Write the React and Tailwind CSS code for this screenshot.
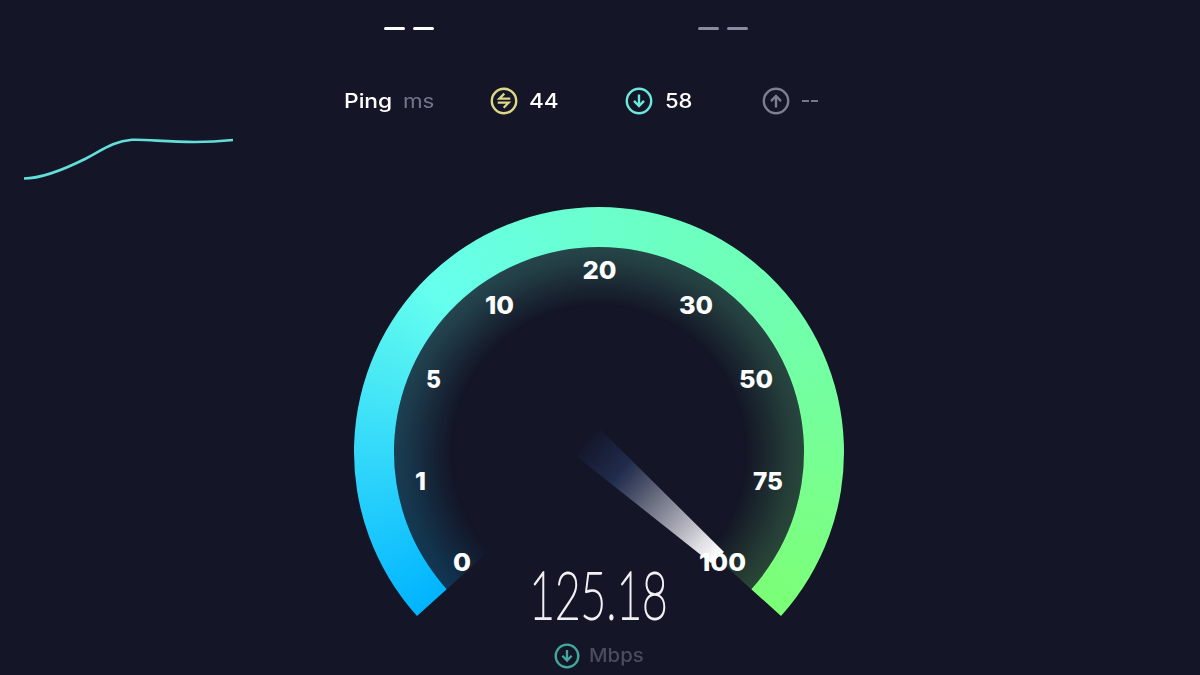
import React from 'react';

const labels = [
  { text: '0', x: 453, y: 570.5, width: 18 },
  { text: '1', x: 415, y: 489.5, width: 11 },
  { text: '5', x: 426, y: 387.5, width: 15 },
  { text: '10', x: 485, y: 313.5, width: 29 },
  { text: '20', x: 582.5, y: 279, width: 34 },
  { text: '30', x: 679, y: 313.5, width: 34 },
  { text: '50', x: 739, y: 387.5, width: 34 },
  { text: '75', x: 753, y: 489.5, width: 30 },
  { text: '100', x: 699, y: 570.5, width: 47 },
];

function CircleIcon({ type, className, strokeWidth = 2.4 }) {
  return (
    <svg viewBox="0 0 28 28" className={className} fill="none" stroke="currentColor" strokeWidth={strokeWidth}>
      <circle cx="14" cy="14" r="12.2" />
      {type === 'down' && <path d="M14 7.5V19M9 13.8L14 19L19 13.8" />}
      {type === 'up' && <path d="M14 20.5V9M9 14.2L14 9L19 14.2" />}
      {type === 'swap' && <path d="M14.3 6.6L9.3 11.6H20.3M7.7 15.6H18.7L13.7 20.8" strokeWidth="2.2" />}
    </svg>
  );
}

function Dashes({ className }) {
  return (
    <div className={`flex gap-2 ${className}`}>
      <span className="h-[3px] w-[21px] rounded-sm bg-current" />
      <span className="h-[3px] w-[21px] rounded-sm bg-current" />
    </div>
  );
}

function Header() {
  return (
    <header className="h-[130px] pt-[27.4px]">
      <div className="flex pl-[384px]">
        <Dashes className="w-[314px] text-white" />
        <Dashes className="text-[#8a8ba0]" />
      </div>
      <div className="mt-[56.6px] flex h-7 items-center pl-[344px] text-[20px] font-medium text-white">
        <span className="w-[59px]"><span className="inline-block origin-left scale-x-[1.14]">Ping</span></span>
        <span className="w-[87px] font-normal text-[#75768c]"><span className="inline-block origin-left scale-x-[1.12]">ms</span></span>
        <CircleIcon type="swap" className="mr-[11px] size-7 text-[#ded886]" />
        <span className="w-[96px]"><span className="inline-block origin-left scale-x-[1.13]">44</span></span>
        <CircleIcon type="down" className="mr-3 size-7 text-[#6be9dc]" />
        <span className="w-[97px]"><span className="inline-block origin-left scale-x-[1.1]">58</span></span>
        <CircleIcon type="up" className="mr-3 size-7 text-[#7d7e92]" />
        <span className="flex gap-[2px] text-[#75768a]">
          <span className="h-[2px] w-[7px] bg-current" />
          <span className="h-[2px] w-[7px] bg-current" />
        </span>
      </div>
    </header>
  );
}

function Gauge() {
  return (
    <svg viewBox="340 200 520 420" className="h-[420px] w-[520px]">
      <defs>
        <clipPath id="ring">
          <path d="M417 616A245 245 0 1 1 781 616L751.3 589.2A205 205 0 1 0 446.7 589.2Z" />
        </clipPath>
        <clipPath id="inside">
          <path d="M599 452L446.7 589.2A205 205 0 1 1 751.3 589.2Z" />
        </clipPath>
        <linearGradient id="needle" gradientUnits="userSpaceOnUse" x1="582" y1="437" x2="717" y2="558">
          <stop offset="0" stopColor="#20305a" stopOpacity="0" />
          <stop offset="0.28" stopColor="#25345c" stopOpacity="0.7" />
          <stop offset="0.5" stopColor="#6b6f83" stopOpacity="0.9" />
          <stop offset="0.88" stopColor="#dedee3" />
          <stop offset="1" stopColor="#fff" />
        </linearGradient>
      </defs>
      <g clipPath="url(#inside)">
        <foreignObject x="349" y="202" width="500" height="500">
          <div className="size-[500px] bg-[conic-gradient(from_222deg,#00b4ff_0deg,#00b4ff_6deg,#34d9fa_48deg,#66ffee_92deg,#6affcc_138deg,#70ffaf_190deg,#78ff8f_235deg,#7cff72_276deg,#7cff72_318deg,#00b4ff_318deg)] opacity-21 [mask-image:radial-gradient(circle_at_center,transparent_145px,rgba(0,0,0,0.4)_168px,rgba(0,0,0,0.8)_190px,black_205px)]" />
        </foreignObject>
      </g>
      <g clipPath="url(#ring)">
        <foreignObject x="349" y="202" width="500" height="500">
          <div className="size-[500px] bg-[conic-gradient(from_222deg,#00b4ff_0deg,#00b4ff_6deg,#34d9fa_48deg,#66ffee_92deg,#6affcc_138deg,#70ffaf_190deg,#78ff8f_235deg,#7cff72_276deg,#7cff72_318deg,#00b4ff_318deg)]" />
        </foreignObject>
      </g>
      <path d="M600 429L724 552L711 563L576 456Z" fill="url(#needle)" />
      <g fill="#fff" fontSize="24.5" fontWeight="800">
        {labels.map((l) => (
          <text key={l.text} x={l.x} y={l.y} textLength={l.width} lengthAdjust="spacingAndGlyphs">{l.text}</text>
        ))}
      </g>
    </svg>
  );
}

export default function App() {
  return (
    <div className="h-[675px] w-[1200px] overflow-hidden bg-[#141526] font-['Inter',sans-serif]">
      <Header />
      <main className="flex h-[545px]">
        <svg viewBox="0 0 240 70" className="h-[70px] w-[240px] shrink-0" fill="none">
          <path d="M24 48.5C43 48.5 68 37.5 86 28.5C103 19.5 114 11 132 9.8C148 9.2 165 12 195 12C212 12 223 11 233 10" stroke="#62dfd9" strokeWidth="2.6" />
        </svg>
        <div className="ml-[100px] pt-[70px]">
          <Gauge />
          <div className="-mt-[55px] flex h-[55px] w-[520px] justify-center">
            <svg viewBox="0 0 140 55" className="h-[55px] w-[140px] overflow-visible">
              <text transform="translate(68.5 53.5) scale(0.67 1)" textAnchor="middle" fill="#f0f0f5" stroke="#f0f0f5" strokeWidth="2" fontFamily="Lato" fontSize="66" fontWeight="100">125.18</text>
            </svg>
          </div>
          <div className="mt-[23px] flex h-[26px] items-center pl-[214px]">
            <CircleIcon type="down" className="size-[26px] text-[#41a99f]" strokeWidth={2.5} />
            <span className="ml-[9px] inline-block origin-left scale-x-[1.1] text-[18.5px] font-medium text-[#4b4c5d]">Mbps</span>
          </div>
        </div>
      </main>
    </div>
  );
}
